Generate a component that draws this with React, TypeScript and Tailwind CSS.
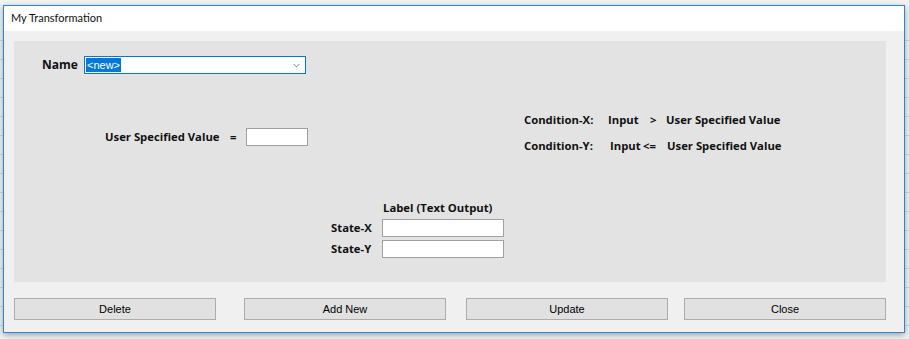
import { ChevronDown } from "lucide-react";

const ui = { fontFamily: '"Open Sans", "Noto Sans", sans-serif' };
const titleFont = { fontFamily: 'Lato, "Open Sans", sans-serif' };
const btnFont = { fontFamily: '"Liberation Sans", Arial, sans-serif' };

function Button({ label, className = "" }: { label: string; className?: string }) {
  return (
    <button
      style={btnFont}
      className={`h-[22px] w-[202px] border border-[#adadad] bg-[#e1e1e1] text-[11px] text-black ${className}`}
    >
      {label}
    </button>
  );
}

function TextBox({ className = "" }: { className?: string }) {
  return <div className={`h-[18px] border border-[#a0a0a0] bg-white ${className}`} />;
}

export default function App() {
  return (
    <div className="relative h-[339px] w-[909px] overflow-hidden bg-[#f3f3f3]" style={ui}>
      {/* window behind the dialog */}
      <div className="absolute inset-0 flex flex-col pt-[22px]">
        {Array.from({ length: 16 }).map((_, i) => (
          <div key={i} className="h-[19px] border-b border-[#d6d6d6]" />
        ))}
      </div>

      <div className="relative pl-[3px] pt-[5px]">
        <div className="flex h-[328px] w-[902px] flex-col border border-[#2b86d6] bg-[#f0f0f0] shadow-[0_2px_6px_rgba(0,0,0,0.35)]">
          <div style={titleFont} className="flex h-[25px] items-center bg-white pl-[7px] text-[11px] text-[#111]">
            My Transformation
          </div>

          <div className="px-[10px] pt-[10px]">
            <div className="h-[241px] w-[872px] bg-[#e3e3e3] text-[11.3px] font-bold text-[#111]">
              {/* name row */}
              <div className="box-content flex h-[18px] items-center pl-[28px] pt-[15px]">
                <span className="w-[42px] text-[12px]">Name</span>
                <div className="flex h-[18px] w-[222px] items-center justify-between border border-[#0078d7] bg-white pl-[1px] pr-[3px]">
                  <span
                    style={btnFont}
                    className="bg-[#0078d7] px-[1px] text-[11px] font-normal leading-[14px] text-white"
                  >
                    {"<new>"}
                  </span>
                  <ChevronDown size={11} strokeWidth={1.5} className="text-[#444]" />
                </div>
              </div>

              {/* value + conditions */}
              <div className="mt-[36px] flex h-[50px]">
                <div className="box-content flex h-[18px] w-[419px] items-center pl-[91px] pt-[18px]">
                  <span className="w-[125px]">User Specified Value</span>
                  <span className="w-[16px]">=</span>
                  <TextBox className="w-[62px]" />
                </div>
                <div className="flex flex-col gap-[12px] pt-[3px]">
                  <div className="flex h-[14px] items-center">
                    <span className="w-[84px]">Condition-X:</span>
                    <span className="w-[42px]">Input</span>
                    <span className="w-[16px]">&gt;</span>
                    <span>User Specified Value</span>
                  </div>
                  <div className="flex h-[14px] items-center">
                    <span className="w-[86px]">Condition-Y:</span>
                    <span className="w-[33px]">Input</span>
                    <span className="w-[24px]">&lt;=</span>
                    <span>User Specified Value</span>
                  </div>
                </div>
              </div>

              {/* state labels */}
              <div className="mt-[41px] flex flex-col pl-[317px]">
                <div className="flex h-[14px] items-center pl-[52px]">Label (Text Output)</div>
                <div className="mt-[4px] flex items-center">
                  <span className="w-[51px]">State-X</span>
                  <TextBox className="w-[122px]" />
                </div>
                <div className="mt-[3px] flex items-center">
                  <span className="w-[51px]">State-Y</span>
                  <TextBox className="w-[122px]" />
                </div>
              </div>
            </div>
          </div>

          <div className="mt-[16px] flex px-[10px]">
            <Button label="Delete" />
            <Button label="Add New" className="ml-[28px]" />
            <Button label="Update" className="ml-[20px]" />
            <Button label="Close" className="ml-[16px]" />
          </div>
        </div>
      </div>
    </div>
  );
}
